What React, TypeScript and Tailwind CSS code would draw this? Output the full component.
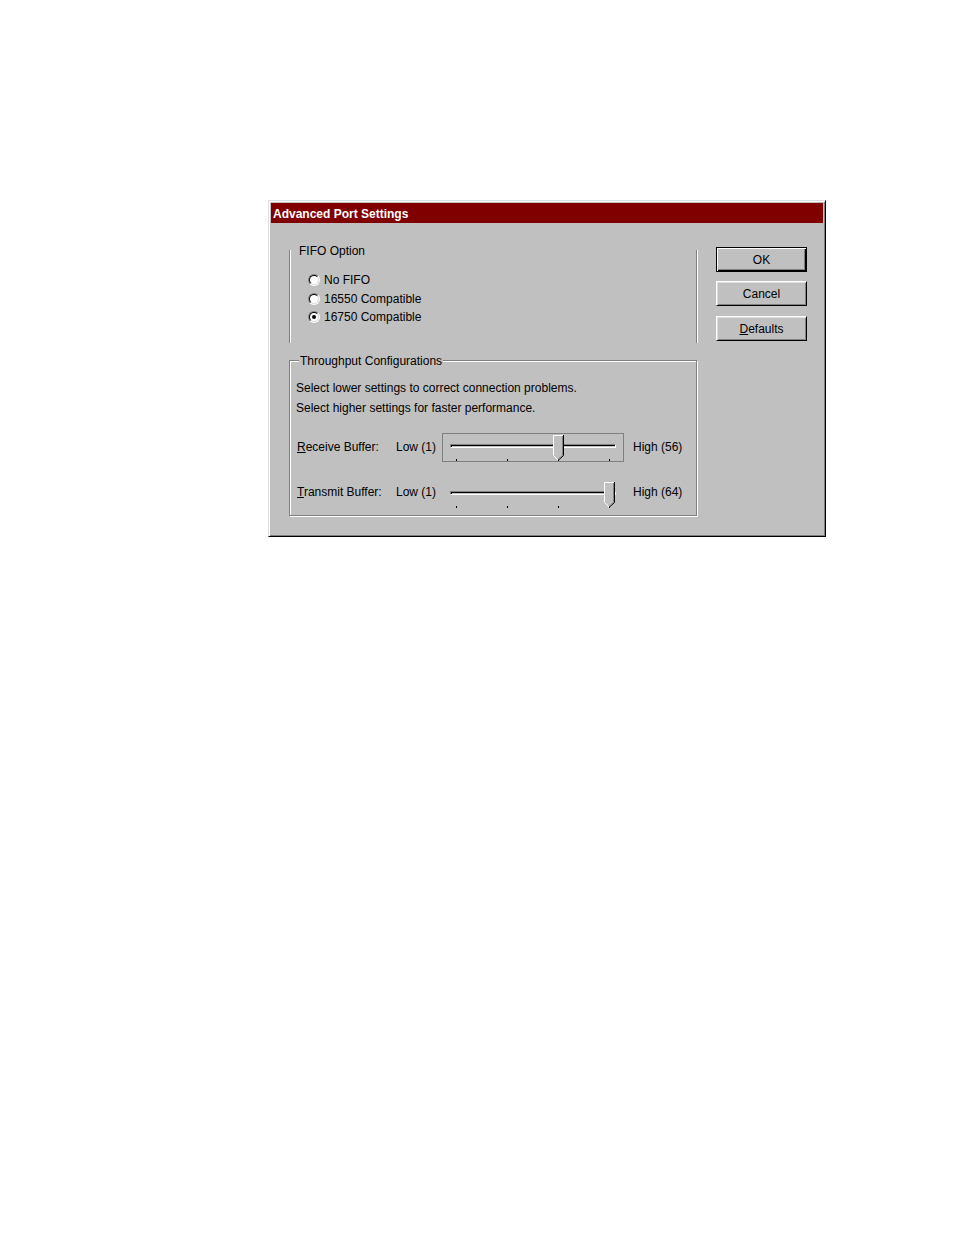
import React from 'react';

const font = "font-['Liberation_Sans',Arial,sans-serif]";

function Radio({ label, checked }: { label: string; checked?: boolean }) {
  return (
    <div className="flex h-[18.5px] items-center">
      <div className="flex h-[12px] w-[12px] items-center justify-center rounded-full border border-t-[#808080] border-l-[#808080] border-r-white border-b-white">
        <div className="flex h-[10px] w-[10px] items-center justify-center rounded-full border border-t-black border-l-black border-r-[#dfdfdf] border-b-[#dfdfdf] bg-white">
          {checked && <div className="h-[4px] w-[4px] rounded-full bg-black" />}
        </div>
      </div>
      <span className="ml-[4px] leading-[14px]">{label}</span>
    </div>
  );
}

function Thumb({ left }: { left: number }) {
  return (
    <svg className="absolute top-[1px]" style={{ left }} width="11" height="26" viewBox="0 0 11 26">
      <polygon points="0,0 10,0 10,20 5,25 0,20" fill="#c0c0c0" />
      <polyline points="0.5,20 0.5,0.5 10,0.5" fill="none" stroke="#fff" strokeWidth="1" />
      <polyline points="10.5,0 10.5,20.5 5,25.5" fill="none" stroke="#000" strokeWidth="1" />
      <polyline points="9.5,1 9.5,20 5,24.5" fill="none" stroke="#808080" strokeWidth="1" />
      <line x1="0.5" y1="20.5" x2="5" y2="25" stroke="#fff" strokeWidth="1" />
    </svg>
  );
}

function Slider({ thumb, focused }: { thumb: number; focused?: boolean }) {
  return (
    <div className={`relative h-[29px] w-[182px] border ${focused ? 'border-[#808080]' : 'border-transparent'}`}>
      <div className="absolute left-[7px] top-[10px] h-[4px] w-[166px] border border-t-[#808080] border-l-[#808080] border-r-white border-b-white bg-[#c0c0c0] shadow-[inset_1px_1px_0_#000]" />
      {[14, 65, 116, 167].map((x) => (
        <div key={x} className="absolute top-[25px] h-[2px] w-[1px] bg-black" style={{ left: x - 1 }} />
      ))}
      <Thumb left={thumb - 6} />
    </div>
  );
}

function Button({ children, primary, className = '' }: { children: React.ReactNode; primary?: boolean; className?: string }) {
  const bevel = primary
    ? 'border border-black shadow-[inset_1px_1px_0_#fff,inset_-1px_-1px_0_#000,inset_-2px_-2px_0_#808080]'
    : 'border border-t-white border-l-white border-r-black border-b-black shadow-[inset_1px_1px_0_#dfdfdf,inset_-1px_-1px_0_#808080]';
  return (
    <div className={`flex h-[25px] w-[91px] items-center justify-center bg-[#c0c0c0] pt-[1px] leading-[14px] ${bevel} ${className}`}>
      {children}
    </div>
  );
}

export default function App() {
  return (
    <div className={`min-h-[1235px] w-full bg-white pl-[268px] pt-[200px] text-[12px] text-black ${font}`}>
      <div className="h-[337px] w-[558px] border border-t-[#dfdfdf] border-l-[#dfdfdf] border-r-black border-b-black bg-[#c0c0c0] p-[2px] shadow-[inset_1px_1px_0_#fff,inset_-1px_-1px_0_#808080]">
        <div className="flex h-[20px] items-center bg-[#800000] pl-[2px] pt-[2px] font-bold text-white">Advanced Port Settings</div>

        <div className="flex items-start pl-[18px]">
          {/* left column */}
          <div className="pt-[27px]">
            <div className="relative h-[93px] w-[408px] border-l border-r border-[#808080] shadow-[inset_1px_0_0_#fff,1px_0_0_#fff]">
              <span className="absolute left-[9px] top-[-6px] leading-[14px]">FIFO Option</span>
              <div className="pl-[18px] pt-[21px]">
                <Radio label="No FIFO" />
                <Radio label="16550 Compatible" />
                <Radio label="16750 Compatible" checked />
              </div>
            </div>

            <div className="relative mt-[17px] h-[156px] w-[408px] border border-[#808080] shadow-[inset_1px_1px_0_#fff,1px_1px_0_#fff]">
              <span className="absolute left-[9px] top-[-7px] bg-[#c0c0c0] px-px leading-[14px]">Throughput Configurations</span>
              <div className="pl-[6px] pt-[17px] leading-[20px]">
                <div>Select lower settings to correct connection problems.</div>
                <div>Select higher settings for faster performance.</div>
              </div>

              <div className="mt-[15px] flex items-start pl-[7px]">
                <span className="mt-[7px] w-[99px] leading-[14px]"><u>R</u>eceive Buffer:</span>
                <span className="mt-[7px] w-[46px] leading-[14px]">Low (1)</span>
                <Slider thumb={116} focused />
                <span className="ml-[9px] mt-[7px] leading-[14px]">High (56)</span>
              </div>

              <div className="mt-[18px] flex items-start pl-[7px]">
                <span className="mt-[5px] w-[99px] leading-[14px]"><u>T</u>ransmit Buffer:</span>
                <span className="mt-[5px] w-[46px] leading-[14px]">Low (1)</span>
                <Slider thumb={167} />
                <span className="ml-[9px] mt-[5px] leading-[14px]">High (64)</span>
              </div>
            </div>
          </div>

          {/* buttons */}
          <div className="ml-[19px] flex flex-col pt-[24px]">
            <Button primary>OK</Button>
            <Button className="mt-[9px]">Cancel</Button>
            <Button className="mt-[10px]"><span><u>D</u>efaults</span></Button>
          </div>
        </div>
      </div>
    </div>
  );
}
